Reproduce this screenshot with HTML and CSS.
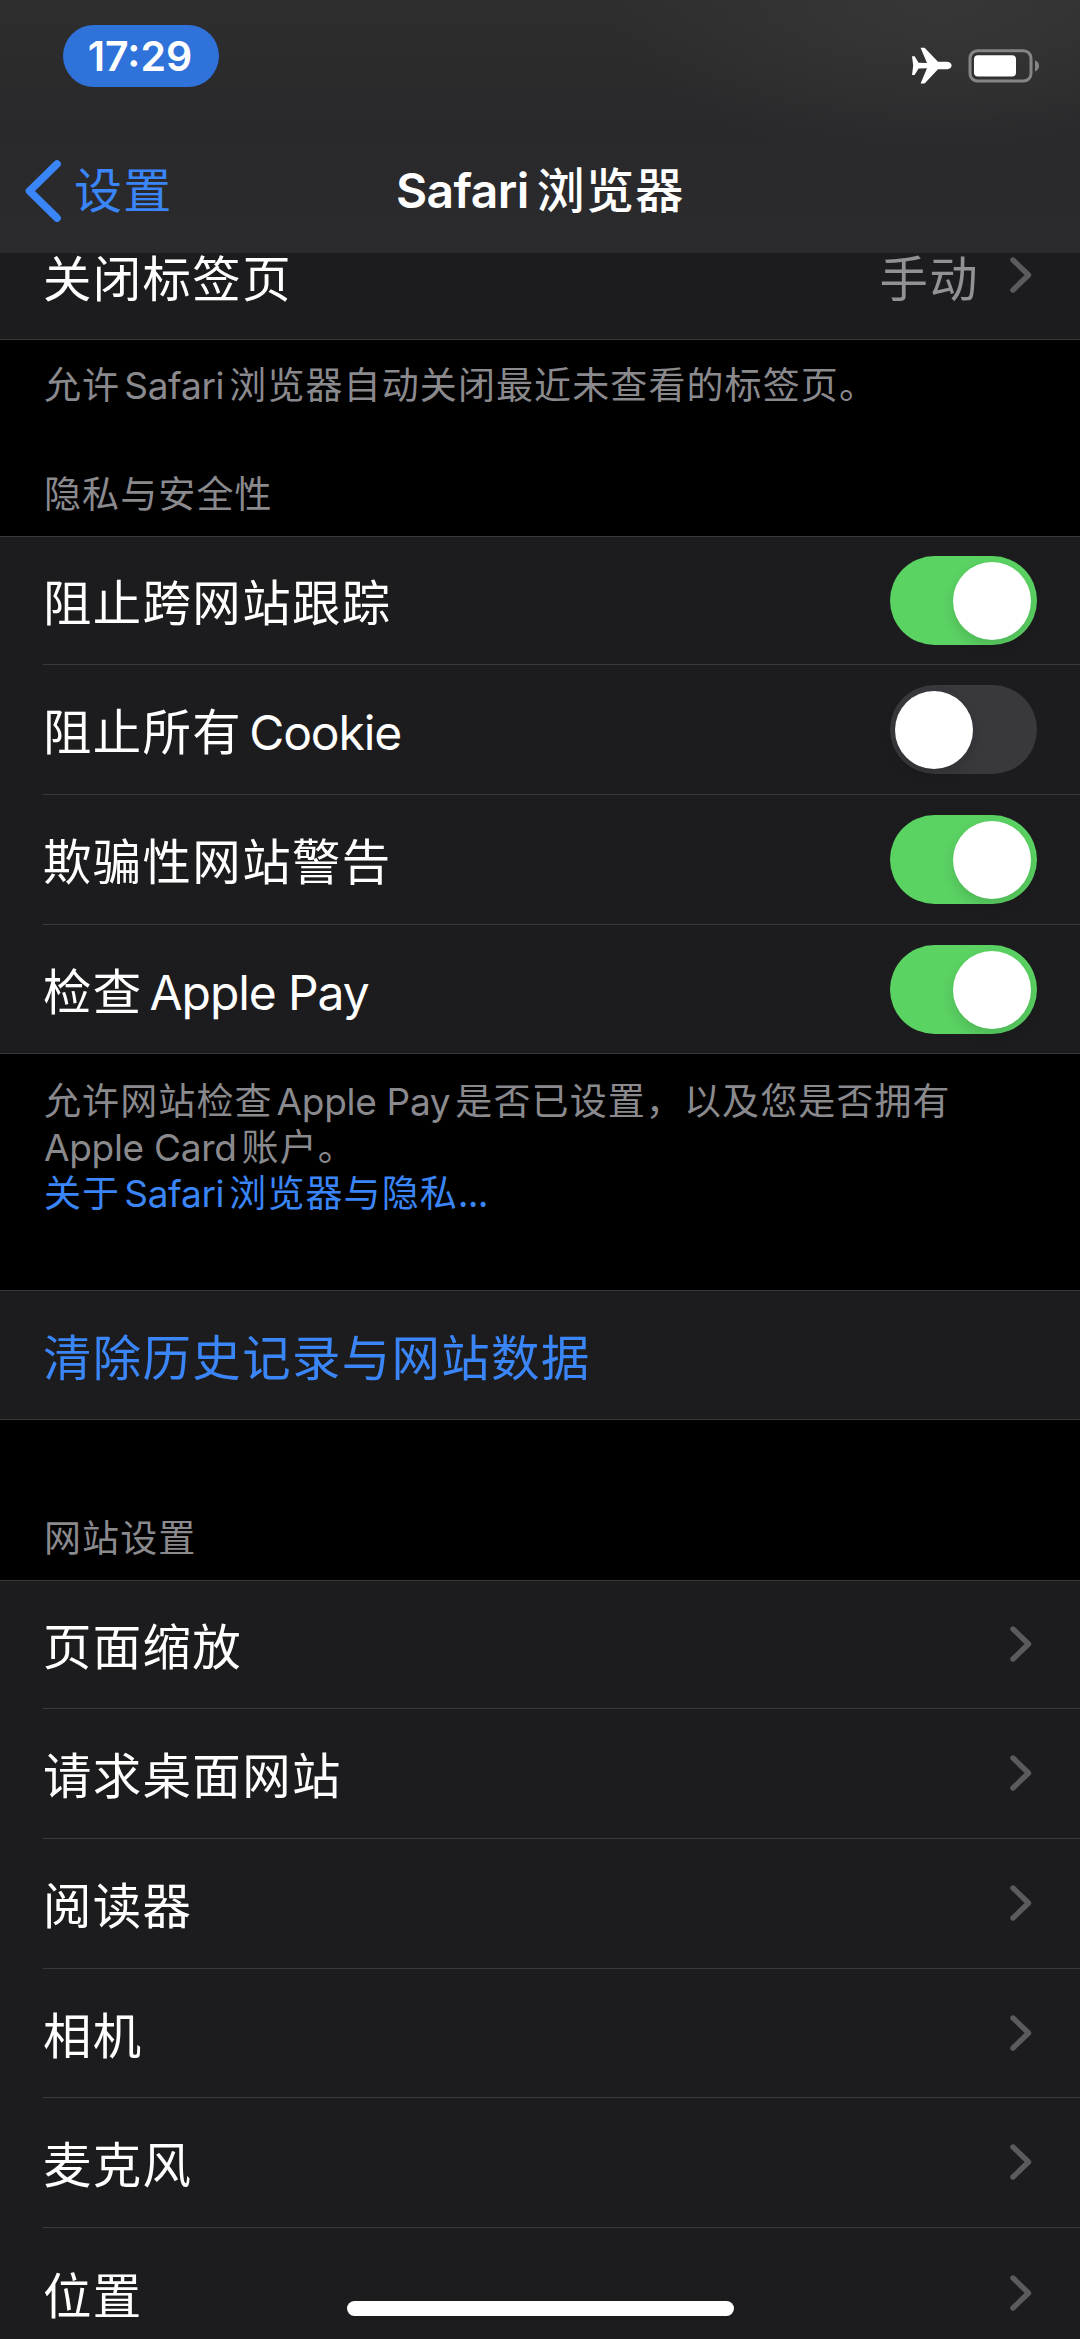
FILE: index.html
```html
<!DOCTYPE html>
<html lang="zh-CN">
<head>
<meta charset="utf-8">
<title>Safari浏览器</title>
<link rel="stylesheet" href="styles.css">
</head>
<body>
<svg width="0" height="0" class="defs" aria-hidden="true">
  <symbol id="chevron" viewBox="0 0 22 36"><path d="M3 3 L18.5 18 L3 33" fill="none" stroke="currentColor" stroke-width="5.4" stroke-linecap="round" stroke-linejoin="round"/></symbol>
</svg>
<div class="screen">
  <header class="top">
    <div class="status">
      <span class="time">17:29</span>
      <span class="indicators">
        <svg class="plane" viewBox="0 0 40 37"><path d="M0 9.3H2.6L6.6 15.7L15 15.9L8.6 0.8H12.6L26 14.8H35.2Q39.6 15.6 39.6 18.6Q39.6 21.6 35.2 22.2H26L12.6 36.4H8.6L15 21.3L6.6 21.5L2.6 27.9H0L1.2 18.6Z" fill="#fff"/></svg>
        <svg class="battery" viewBox="0 0 72 34"><rect x="2" y="1.7" width="61" height="30.4" rx="7.5" fill="none" stroke="#858586" stroke-width="3"/><rect x="6" y="6.2" width="42" height="21.2" rx="4" fill="#fff"/><path d="M67 11.2Q71 12.7 71 16.8T67 22.4Z" fill="#858586"/></svg>
      </span>
    </div>
    <nav class="nav">
      <a class="back"><svg class="back-icon" viewBox="0 0 36 62"><path d="M32 4 L4.5 31 L32 58" fill="none" stroke="currentColor" stroke-width="7.6" stroke-linecap="round" stroke-linejoin="round"/></svg><span class="back-label">设置</span></a>
      <h1 class="title"><span class="latin">Safari</span>浏览器</h1>
    </nav>
  </header>

  <main class="content">
    <section class="group group-first">
      <div class="row"><span>关闭标签页</span><span class="value">手动</span><svg class="chev"><use href="#chevron"/></svg></div>
    </section>
    <p class="note note-tabs">允许<span class="latin">Safari</span>浏览器自动关闭最近未查看的标签页。</p>

    <h2 class="heading heading-privacy">隐私与安全性</h2>
    <section class="group">
      <div class="row row-short"><span>阻止跨网站跟踪</span><i class="switch on"></i></div>
      <div class="row"><span>阻止所有<span class="latin">Cookie</span></span><i class="switch"></i></div>
      <div class="row"><span>欺骗性网站警告</span><i class="switch on"></i></div>
      <div class="row row-short"><span>检查<span class="latin">Apple Pay</span></span><i class="switch on"></i></div>
    </section>
    <p class="note note-privacy">允许网站检查<span class="latin">Apple Pay</span>是否已设置，以及您是否拥有<br><span class="latin line-start">Apple Card</span>账户。<br><a class="link">关于<span class="latin">Safari</span>浏览器与隐私<span class="dots">...</span></a></p>

    <section class="group">
      <div class="row row-short"><a class="link">清除历史记录与网站数据</a></div>
    </section>

    <h2 class="heading heading-sites">网站设置</h2>
    <section class="group">
      <div class="row row-short"><span>页面缩放</span><svg class="chev"><use href="#chevron"/></svg></div>
      <div class="row"><span>请求桌面网站</span><svg class="chev"><use href="#chevron"/></svg></div>
      <div class="row"><span>阅读器</span><svg class="chev"><use href="#chevron"/></svg></div>
      <div class="row row-medium"><span>相机</span><svg class="chev"><use href="#chevron"/></svg></div>
      <div class="row"><span>麦克风</span><svg class="chev"><use href="#chevron"/></svg></div>
      <div class="row"><span>位置</span><svg class="chev"><use href="#chevron"/></svg></div>
    </section>
  </main>
  <div class="home"></div>
</div>
</body>
</html>
```
FILE: styles.css
```css
* { box-sizing: border-box; }

body {
  margin: 0;
  background: #000;
  color: #fff;
  font-family: "Noto Sans CJK SC", sans-serif;
}

.defs { position: absolute; }

.screen {
  position: relative;
  width: 1080px;
  height: 2339px;
  overflow: hidden;
}

.latin, .time { font-family: Inter, "Noto Sans CJK SC", sans-serif; }
.latin { line-height: 0; }

/* Status bar and navigation */
.top {
  position: relative;
  z-index: 1;
  height: 253px;
  background:
    radial-gradient(ellipse 330px 160px at 940px 0, #373738, rgba(55, 55, 56, 0)),
    linear-gradient(#2e2e2f, #29292b 50%, #2b2b2d);
}

.status {
  display: flex;
  justify-content: space-between;
  height: 128px;
  padding: 25px 40px 0 63px;
}

.time {
  width: 156px;
  height: 62px;
  padding-right: 2px;
  border-radius: 31px;
  background: #2f73da;
  font-size: 41px;
  font-weight: 600;
  line-height: 62px;
  text-align: center;
}

.indicators { display: flex; gap: 16px; }
.plane { width: 40px; height: 37px; margin-top: 22px; }
.battery { width: 72px; height: 34px; margin-top: 24px; }

.nav {
  display: grid;
  grid-template-columns: 398px auto 1fr;
  align-items: center;
  height: 125px;
}

.back {
  display: flex;
  align-items: center;
  gap: 13px;
  padding-left: 25px;
  color: #3a85f7;
  font-size: 48px;
  letter-spacing: 1.3px;
}

.back-icon { width: 36px; height: 62px; }
.back-label { margin-top: -7px; }

.title {
  margin: -7px 0 0;
  font-size: 48px;
  font-weight: 500;
  letter-spacing: 1.3px;
  line-height: 70px;
  white-space: nowrap;
}

.title .latin {
  margin: 0 8px 0 -2px;
  font-size: 48px;
  font-weight: 600;
  letter-spacing: -0.6px;
}

/* Grouped lists */
.content { margin-top: -43px; }

.group {
  background: #1c1c1e;
  border-top: 1px solid #38383b;
  border-bottom: 1px solid #38383b;
}

.row {
  display: flex;
  align-items: center;
  height: 130px;
  margin-left: 43px;
  padding: 0 43px 1px 0;
  border-bottom: 1px solid #38383b;
  font-size: 48.4px;
  letter-spacing: 1.4px;
  white-space: nowrap;
}

.row > :first-child { flex: 1; }
.row:last-child { border-bottom: 0; }
.row-short { height: 128px; }
.row-medium { height: 129px; }

.row .latin { margin-left: 7px; font-size: 48px; letter-spacing: -1.1px; }

.value { margin-right: 31px; color: #929296; }

.chev {
  width: 22px;
  height: 36px;
  margin: 0 5px 0 0;
  color: #5b5b5f;
}

.group-first .chev { margin-top: -1px; }

.switch {
  width: 147px;
  height: 89px;
  margin-top: 1px;
  padding: 6px 6px 5px 5px;
  border-radius: 45px;
  background: #39393d;
}

.switch::before {
  content: "";
  display: block;
  width: 78px;
  height: 78px;
  border-radius: 50%;
  background: #fff;
  box-shadow: 0 6px 14px rgba(0, 0, 0, 0.14);
}

.switch.on { background: #5bd363; }
.switch.on::before { margin-left: auto; }

.link { color: #3a85f7; }

/* Captions */
.note, .heading {
  margin: 0 0 0 44px;
  color: #8a8a8e;
  font-size: 37px;
  font-weight: 400;
  letter-spacing: 1.1px;
  line-height: 46px;
  white-space: nowrap;
}

.note .latin { margin: 0 5px 0 4px; font-size: 37px; letter-spacing: -0.3px; }
.note .latin.line-start { margin-left: 0; }
.dots { letter-spacing: -0.2px; }

.group-first { height: 130px; }
.note-tabs { height: 109px; padding-top: 20px; }
.heading-privacy { height: 87px; padding-top: 20px; }
.note-privacy { height: 236px; padding-top: 22px; }
.heading-sites { height: 160px; padding-top: 93px; }

.home {
  position: absolute;
  left: 347px;
  top: 2301px;
  width: 387px;
  height: 15px;
  border-radius: 8px;
  background: #fff;
}
```
